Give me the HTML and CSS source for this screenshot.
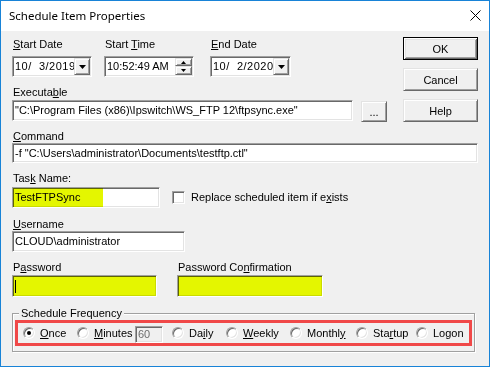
FILE: index.html
```html
<!DOCTYPE html>
<html>
<head>
<meta charset="utf-8">
<link rel="stylesheet" href="styles.css">
</head>
<body>
<div class="window">
  <div class="titlebar">
    <span class="title">Schedule Item Properties</span>
    <svg class="close" width="11" height="11" viewBox="0 0 11 11"><path d="M0.5 0.5L10.5 10.5M10.5 0.5L0.5 10.5" stroke="#000" stroke-width="1" fill="none"/></svg>
  </div>
  <div class="client">
    <div class="top">
      <div class="top-left">
        <div class="row1">
          <div class="field f-start">
            <span class="label row1-label"><u>S</u>tart Date</span>
            <div class="sunken combo"><span class="combo-text">10/  3/2019</span><span class="raised drop"><svg width="7" height="4" viewBox="0 0 7 4"><polygon points="0,0 7,0 3.5,4" fill="#000"/></svg></span></div>
          </div>
          <div class="field f-time">
            <span class="label row1-label">Start <u>T</u>ime</span>
            <div class="sunken combo"><span class="time-text">10:52:49 AM</span><span class="spin"><span class="raised spin-btn up"><svg width="5" height="3" viewBox="0 0 5 3"><polygon points="2.5,0 5,3 0,3" fill="#000"/></svg></span><span class="raised spin-btn down"><svg width="5" height="3" viewBox="0 0 5 3"><polygon points="0,0 5,0 2.5,3" fill="#000"/></svg></span></span></div>
          </div>
          <div class="field f-end">
            <span class="label row1-label"><u>E</u>nd Date</span>
            <div class="sunken combo"><span class="combo-text">10/  2/2020</span><span class="raised drop"><svg width="7" height="4" viewBox="0 0 7 4"><polygon points="0,0 7,0 3.5,4" fill="#000"/></svg></span></div>
          </div>
        </div>
        <span class="label exec-label">Executa<u>b</u>le</span>
        <div class="exec-row">
          <div class="sunken textbox exec-box">"C:\Program Files (x86)\Ipswitch\WS_FTP 12\ftpsync.exe"</div>
          <div class="raised btn browse">...</div>
        </div>
      </div>
      <div class="buttons">
        <div class="btn default">OK</div>
        <div class="raised btn">Cancel</div>
        <div class="raised btn">Help</div>
      </div>
    </div>

    <span class="label cmd-label"><u>C</u>ommand</span>
    <div class="sunken textbox cmd-box">-f "C:\Users\administrator\Documents\testftp.ctl"</div>

    <span class="label task-label">Tas<u>k</u> Name:</span>
    <div class="task-line">
      <div class="sunken textbox task-box">TestFTPSync<span class="hl hl-task"></span></div>
      <div class="check-opt"><span class="sunken checkbox"></span><span>Replace scheduled item if e<u>x</u>ists</span></div>
    </div>

    <span class="label user-label"><u>U</u>sername</span>
    <div class="sunken textbox user-box">CLOUD\administrator</div>

    <div class="pw-row">
      <div class="field f-pw">
        <span class="label">P<u>a</u>ssword</span>
        <div class="sunken textbox pw-box"><span class="caret"></span><span class="hl hl-full"></span></div>
      </div>
      <div class="field f-pwc">
        <span class="label">Password Co<u>n</u>firmation</span>
        <div class="sunken textbox pw-box"><span class="hl hl-full"></span></div>
      </div>
    </div>

    <div class="group">
      <div class="group-title">Schedule Frequency</div>
      <div class="freq">
        <div class="opt"><span class="radio checked"></span><span><u>O</u>nce</span></div>
        <div class="opt"><span class="radio"></span><span><u>M</u>inutes</span></div>
        <div class="opt"><span class="sunken minutes-box">60</span></div>
        <div class="opt"><span class="radio"></span><span>Da<u>i</u>ly</span></div>
        <div class="opt"><span class="radio"></span><span><u>W</u>eekly</span></div>
        <div class="opt"><span class="radio"></span><span>Monthl<u>y</u></span></div>
        <div class="opt"><span class="radio"></span><span>Sta<u>r</u>tup</span></div>
        <div class="opt"><span class="radio"></span><span>Logon</span></div>
      </div>
    </div>
  </div>
</div>
</body>
</html>
```
FILE: styles.css
```css
* { box-sizing: border-box; }

body {
  margin: 0;
  background: #fff;
  font-family: "Liberation Sans", Arial, sans-serif;
  font-size: 11px;
  color: #000;
}

u { text-decoration: underline; text-underline-offset: 1px; }

.window {
  width: 490px;
  height: 367px;
  border: 1px solid #1883d7;
  background: #f0f0f0;
  display: flex;
  flex-direction: column;
}

.titlebar {
  flex: none;
  height: 30px;
  background: #fff;
  display: flex;
  align-items: center;
  justify-content: space-between;
  padding: 0 8px 2px 8px;
}

.title {
  font-family: "Noto Sans", sans-serif;
  font-size: 11.5px;
}

.client {
  flex: 1;
  display: flex;
  flex-direction: column;
  padding: 6px 11px 0 11px;
}

.label {
  display: block;
  height: 13px;
  line-height: 13px;
  white-space: nowrap;
  padding-left: 1px;
}

/* 3D borders */
.sunken {
  border: 1px solid;
  border-color: #a0a0a0 #fff #fff #a0a0a0;
  box-shadow: inset 1px 1px 0 #696969, inset -1px -1px 0 #e3e3e3;
  background: #fff;
}

.raised {
  border: 1px solid;
  border-color: #e3e3e3 #696969 #696969 #e3e3e3;
  box-shadow: inset 1px 1px 0 #fff, inset -1px -1px 0 #a0a0a0;
  background: #f0f0f0;
}

.textbox {
  position: relative;
  display: flex;
  align-items: center;
  padding: 0 2px;
  line-height: 13px;
  white-space: nowrap;
  overflow: hidden;
}

/* top section */
.top { display: flex; }

.top-left {
  width: 375px;
  margin-top: 1px;
}

.row1 { display: flex; }

.f-start { width: 80px; }
.f-time { width: 90px; margin-left: 12px; }
.f-end { width: 81px; margin-left: 16px; }

.row1-label { margin-bottom: 5px; }

.combo {
  height: 21px;
  display: flex;
  padding: 1px;
}

.combo-text {
  flex: 1;
  overflow: hidden;
  white-space: pre;
  line-height: 17px;
  padding-left: 1px;
  letter-spacing: 0.5px;
}

.time-text {
  flex: 1;
  white-space: pre;
  line-height: 17px;
  padding-left: 1px;
}

.drop {
  flex: none;
  width: 16px;
  display: flex;
  align-items: center;
  justify-content: center;
}

.drop svg { display: block; }

.spin {
  flex: none;
  width: 17px;
  display: flex;
  flex-direction: column;
}

.spin-btn {
  display: flex;
  align-items: center;
  justify-content: center;
}

.spin-btn.up { height: 8px; }
.spin-btn.down { height: 9px; }
.spin-btn svg { display: block; }

.exec-label { margin-top: 9px; }

.exec-row {
  display: flex;
  margin-top: 1px;
}

.exec-box {
  width: 341px;
  height: 21px;
}

.btn {
  display: flex;
  align-items: center;
  justify-content: center;
  width: 75px;
  height: 23px;
}

.browse {
  width: 26px;
  height: 21px;
  margin-left: 8px;
  margin-top: 1px;
  align-items: flex-end;
  padding-bottom: 3px;
}

.buttons {
  margin-left: 16px;
  display: flex;
  flex-direction: column;
  gap: 8px;
}

.btn.default {
  border: 1px solid #000;
  background: #f0f0f0;
  box-shadow: inset 1px 1px 0 #fff, inset -1px -1px 0 #696969, inset 2px 2px 0 #e3e3e3, inset -2px -2px 0 #a0a0a0;
}

/* command */
.cmd-label { margin-top: 8px; }

.cmd-box {
  width: 466px;
  height: 20px;
}

/* task */
.task-label { margin-top: 9px; }

.task-line {
  display: flex;
  align-items: center;
  margin-top: 2px;
}

.task-box {
  width: 148px;
  height: 21px;
}

.check-opt {
  display: flex;
  align-items: center;
  margin-left: 12px;
  gap: 6px;
  line-height: 13px;
}

.checkbox {
  width: 13px;
  height: 13px;
  flex: none;
}

.hl {
  position: absolute;
  top: -1px;
  left: -1px;
  background: #e4f600;
  mix-blend-mode: multiply;
}

.hl-task {
  width: 91px;
  height: 22px;
}

.hl-full {
  right: -1px;
  bottom: -1px;
}

/* username */
.user-label { margin-top: 10px; }

.user-box {
  width: 173px;
  height: 21px;
}

/* password */
.pw-row {
  display: flex;
  margin-top: 9px;
}

.f-pw { width: 145px; }
.f-pwc { width: 146px; margin-left: 20px; }

.pw-box {
  margin-top: 1px;
  height: 22px;
}

.caret {
  display: block;
  width: 1px;
  height: 13px;
  background: #000;
  margin-left: 0;
}

/* group */
.group {
  margin-top: 16px;
  width: 463px;
  border: 1px solid #a0a0a0;
  box-shadow: inset 1px 1px 0 #fff, 1px 1px 0 #fff;
  padding: 0 2px 5px 2px;
}

.group-title {
  width: fit-content;
  margin: -7px 0 0 4px;
  padding: 0 2px;
  line-height: 13px;
  background: #f0f0f0;
}

.freq {
  height: 26px;
  border: 3px solid #f04848;
  display: grid;
  grid-template-columns: 54px 58px 37px 54px 64px 66px 60px 1fr;
  align-items: center;
  padding-left: 5px;
  line-height: 13px;
}

.opt {
  display: flex;
  align-items: center;
  gap: 5px;
  white-space: nowrap;
}

.radio {
  position: relative;
  flex: none;
  width: 12px;
  height: 12px;
  border-radius: 50%;
  background: #fff;
  border: 1px solid;
  border-color: #a0a0a0 #fff #fff #a0a0a0;
  box-shadow: inset 1px 1px 0 #696969, inset -1px -1px 0 #e3e3e3;
}

.radio.checked::after {
  content: "";
  position: absolute;
  left: 3px;
  top: 3px;
  width: 4px;
  height: 4px;
  border-radius: 50%;
  background: #000;
}

.minutes-box {
  display: flex;
  align-items: center;
  width: 28px;
  height: 17px;
  margin-top: 3px;
  padding-left: 2px;
  background: #f0f0f0;
  color: #6d6d6d;
}
```
